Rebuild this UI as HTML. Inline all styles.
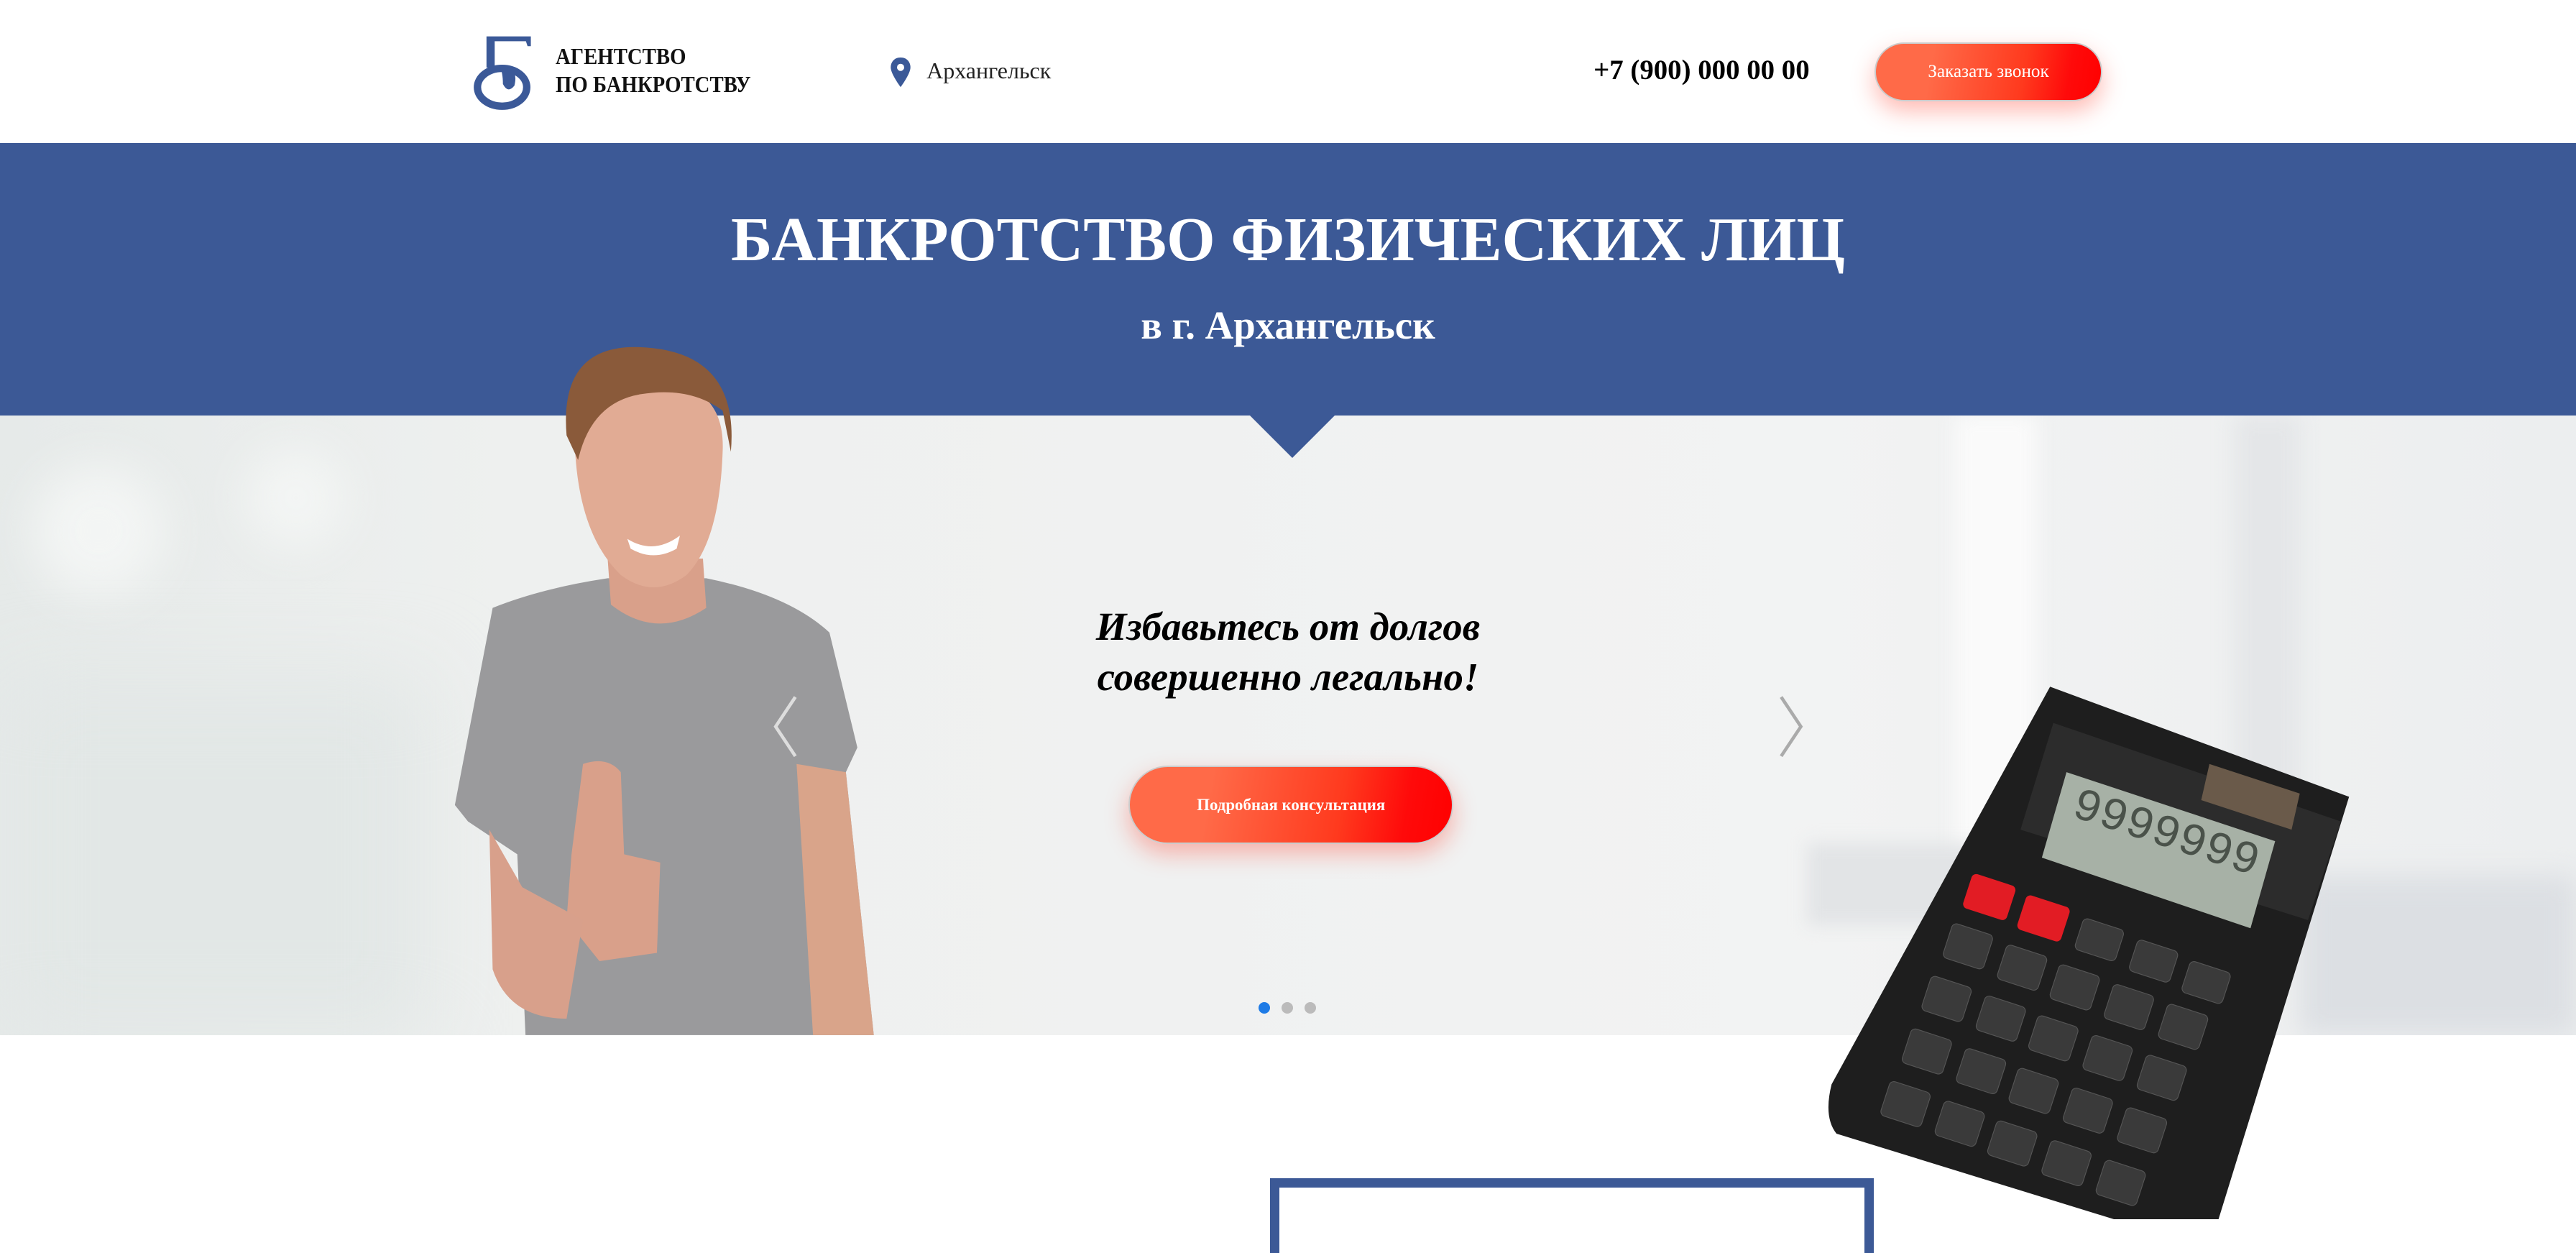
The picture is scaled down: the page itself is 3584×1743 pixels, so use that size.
<!DOCTYPE html>
<html><head><meta charset="utf-8"><style>
html{zoom:2.285714}
body{margin:0;width:1568px;height:742px;overflow:hidden;background:#fff;font-family:"Liberation Serif",serif;position:relative}
.a{position:absolute}
.btn{position:absolute;border-radius:30px;background:linear-gradient(100deg,#ff6a48 0%,#ff6a48 25%,#ff3a1e 65%,#ff0a0a 85%,#ff0000 100%);color:#fff;text-align:center;box-shadow:0 6px 14px rgba(255,60,40,.35);border:1px solid #ccc}
</style></head><body>
<svg class="a" style="left:286px;top:20px" width="40" height="50" viewBox="286 20 40 50">
<path d="M296 22h27v6h-2l-1-3h-19v16h-5z" fill="#3b5998"/>
<ellipse cx="305.5" cy="53" rx="15" ry="11.5" fill="none" stroke="#3b5998" stroke-width="4.5"/>
<path d="M304 40 q12 0 9 12 q-4 5 -7 -1 q0 -7 -2 -11z" fill="#3b5998"/>
</svg>
<div class="a" style="left:338px;top:26px;font-size:14px;font-weight:bold;line-height:17px;color:#111;transform:scaleX(.9);transform-origin:left">АГЕНТСТВО<br>ПО БАНКРОТСТВУ</div>
<svg class="a" style="left:541px;top:35px" width="14" height="18" viewBox="0 0 14 18"><path d="M7 0C3 0 1 3 1 6c0 4 6 12 6 12s6-8 6-12c0-3-2-6-6-6z" fill="#3b5998"/><circle cx="7" cy="6" r="2.2" fill="#fff"/></svg>
<div class="a" style="left:564px;top:35px;font-size:14px;color:#222">Архангельск</div>
<div class="a" style="left:970px;top:33px;font-size:17px;font-weight:bold;color:#000;white-space:nowrap">+7 (900) 000 00 00</div>
<div class="btn" style="left:1141px;top:26px;width:137px;height:34px;line-height:34px;font-size:11px">Заказать звонок</div>
<div class="a" style="left:0;top:87px;width:1568px;height:166px;background:#3c5996"></div>
<div class="a" style="left:0;top:253px;width:1568px;height:377px;background:linear-gradient(90deg,#e6eae9 0%,#eef0ef 20%,#f0f1f1 45%,#f2f3f3 70%,#eceeef 100%);overflow:hidden">
 <div class="a" style="left:20px;top:30px;width:80px;height:80px;border-radius:50%;background:#f3f5f4;filter:blur(14px)"></div>
 <div class="a" style="left:150px;top:20px;width:60px;height:60px;border-radius:50%;background:#f3f5f4;filter:blur(14px)"></div>
 <div class="a" style="left:0;top:160px;width:260px;height:220px;background:#e2e7e6;filter:blur(25px)"></div>
 <div class="a" style="left:1190px;top:0;width:50px;height:300px;background:#fafafa;filter:blur(6px)"></div>
 <div class="a" style="left:1360px;top:0;width:40px;height:300px;background:#e4e6e8;filter:blur(6px)"></div>
 <div class="a" style="left:1400px;top:280px;width:168px;height:97px;background:#dcdfe3;filter:blur(8px)"></div>
 <div class="a" style="left:1100px;top:260px;width:120px;height:50px;background:#e2e4e6;filter:blur(5px)"></div>
</div>
<div class="a" style="left:760px;top:252px;width:0;height:0;border-left:27px solid transparent;border-right:27px solid transparent;border-top:27px solid #3c5996"></div>
<svg class="a" style="left:260px;top:200px" width="300" height="430" viewBox="260 200 300 430">
<path d="M300 370 Q330 358 370 352 L430 352 Q480 362 505 385 L522 455 L515 470 L532 630 L320 630 L315 520 L285 500 L277 490 Z" fill="#9a9a9c"/>
<path d="M485 465 L515 470 L532 630 L495 630 Z" fill="#d9a48a"/>
<path d="M370 340 L428 340 L430 370 Q400 390 372 368 Z" fill="#d9a08a"/>
<path d="M350 270 Q348 232 395 232 Q442 232 440 275 Q438 330 418 350 Q398 365 378 350 Q352 325 350 270 Z" fill="#e1ab94"/>
<path d="M345 265 Q340 205 398 212 Q450 218 445 275 L440 250 Q420 235 390 240 Q360 245 352 280 Z" fill="#8a5a3a"/>
<path d="M382 328 Q398 338 414 326 L412 334 Q398 342 384 334 Z" fill="#fff"/>
<path d="M355 465 Q370 460 378 470 L380 520 L402 525 L400 580 L365 585 L345 560 L348 520 Z" fill="#d9a08a"/>
<path d="M298 505 L300 590 Q310 620 345 620 L355 560 L318 540 Z" fill="#d8a08b"/>
</svg>
<div class="a" style="left:0;top:366px;width:1568px;text-align:center;font-size:24px;font-weight:bold;font-style:italic;line-height:31px;color:#000">Избавьтесь от долгов<br>совершенно легально!</div>
<div class="btn" style="left:687px;top:466px;width:196px;height:46px;line-height:46px;font-size:10px;font-weight:bold">Подробная консультация</div>
<svg class="a" style="left:468px;top:422px" width="20" height="40"><path d="M16 2 L4 20 L16 38" fill="none" stroke="#ddd" stroke-width="2"/></svg>
<svg class="a" style="left:1080px;top:422px" width="20" height="40"><path d="M4 2 L16 20 L4 38" fill="none" stroke="#aaa" stroke-width="2"/></svg>
<div class="a" style="left:766px;top:610px;width:7px;height:7px;border-radius:50%;background:#1e7be6"></div>
<div class="a" style="left:780px;top:610px;width:7px;height:7px;border-radius:50%;background:#bbb"></div>
<div class="a" style="left:794px;top:610px;width:7px;height:7px;border-radius:50%;background:#bbb"></div>
<div class="a" style="left:773px;top:717px;width:356px;height:40px;border:6px solid #3c5996;border-bottom:none"></div>
<svg class="a" style="left:1100px;top:410px" width="350" height="332" viewBox="1100 410 350 332">
<path d="M1248 418 L1430 485 L1345 760 L1118 690 Q1110 680 1115 660 Z" fill="#1e1e1e"/>
<path d="M1250 440 L1425 500 L1405 560 L1230 505 Z" fill="#2c2c2c"/>
<path d="M1258 470 L1385 512 L1370 565 L1243 522 Z" fill="#a7b1a6"/>
<path d="M1345 465 L1400 483 L1395 505 L1340 487 Z" fill="#6a5a4a"/>
<text x="1255" y="510" transform="rotate(18 1300 520)" font-family="Liberation Mono" font-size="28" fill="#4a524a">9999999</text>
<rect x="1197" y="535" width="28" height="22" rx="3" fill="#e21c24" transform="rotate(18 1211 546)"/>
<rect x="1230" y="548" width="28" height="22" rx="3" fill="#e21c24" transform="rotate(18 1244 559)"/>
<g fill="#3a3a3a" stroke="#555" stroke-width=".5">
<rect x="1265" y="562" width="26" height="20" rx="3" transform="rotate(18 1278 572)"/>
<rect x="1298" y="575" width="26" height="20" rx="3" transform="rotate(18 1311 585)"/>
<rect x="1330" y="588" width="26" height="20" rx="3" transform="rotate(18 1343 598)"/>
<rect x="1185" y="565" width="26" height="22" rx="3" transform="rotate(18 1198 576)"/>
<rect x="1218" y="578" width="26" height="22" rx="3" transform="rotate(18 1231 589)"/>
<rect x="1250" y="590" width="26" height="22" rx="3" transform="rotate(18 1263 601)"/>
<rect x="1283" y="602" width="26" height="22" rx="3" transform="rotate(18 1296 613)"/>
<rect x="1316" y="614" width="26" height="22" rx="3" transform="rotate(18 1329 625)"/>
<rect x="1172" y="597" width="26" height="22" rx="3" transform="rotate(18 1185 608)"/>
<rect x="1205" y="609" width="26" height="22" rx="3" transform="rotate(18 1218 620)"/>
<rect x="1237" y="621" width="26" height="22" rx="3" transform="rotate(18 1250 632)"/>
<rect x="1270" y="633" width="26" height="22" rx="3" transform="rotate(18 1283 644)"/>
<rect x="1303" y="645" width="26" height="22" rx="3" transform="rotate(18 1316 656)"/>
<rect x="1160" y="629" width="26" height="22" rx="3" transform="rotate(18 1173 640)"/>
<rect x="1193" y="641" width="26" height="22" rx="3" transform="rotate(18 1206 652)"/>
<rect x="1225" y="653" width="26" height="22" rx="3" transform="rotate(18 1238 664)"/>
<rect x="1258" y="665" width="26" height="22" rx="3" transform="rotate(18 1271 676)"/>
<rect x="1291" y="677" width="26" height="22" rx="3" transform="rotate(18 1304 688)"/>
<rect x="1147" y="661" width="26" height="22" rx="3" transform="rotate(18 1160 672)"/>
<rect x="1180" y="673" width="26" height="22" rx="3" transform="rotate(18 1193 684)"/>
<rect x="1212" y="685" width="26" height="22" rx="3" transform="rotate(18 1225 696)"/>
<rect x="1245" y="697" width="26" height="22" rx="3" transform="rotate(18 1258 708)"/>
<rect x="1278" y="709" width="26" height="22" rx="3" transform="rotate(18 1291 720)"/>
</g>
</svg>
<div class="a" style="left:0;top:124px;width:1568px;text-align:center;font-size:38px;font-weight:bold;color:#fff;white-space:nowrap">БАНКРОТСТВО ФИЗИЧЕСКИХ ЛИЦ</div>
<div class="a" style="left:0;top:184px;width:1568px;text-align:center;font-size:24px;font-weight:bold;color:#fff">в г. Архангельск</div>
</body></html>
